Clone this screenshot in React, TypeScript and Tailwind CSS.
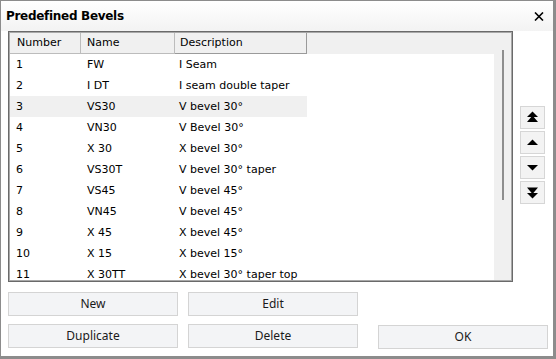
const rows = [
  ["1", "FW", "I Seam"],
  ["2", "I DT", "I seam double taper"],
  ["3", "VS30", "V bevel 30°"],
  ["4", "VN30", "V Bevel 30°"],
  ["5", "X 30", "X bevel 30°"],
  ["6", "VS30T", "V bevel 30° taper"],
  ["7", "VS45", "V bevel 45°"],
  ["8", "VN45", "V bevel 45°"],
  ["9", "X 45", "X bevel 45°"],
  ["10", "X 15", "X bevel 15°"],
  ["11", "X 30TT", "X bevel 30° taper top"],
];

const Btn = ({ label }: { label: string }) => (
  <button className="h-[24px] w-[170px] border border-[#d4d4d4] bg-[#f3f4f6] text-[12px] text-[#1a1a1a] font-['Noto_Sans',sans-serif]">
    {label}
  </button>
);

const ArrowBtn = ({ kind }: { kind: "top" | "up" | "down" | "bottom" }) => (
  <button className="flex h-[23px] w-[25px] items-center justify-center border border-[#d6d6d6] bg-[#f3f3f3]">
    <svg width="13" height="13" viewBox="0 0 13 13" fill="black">
      {kind === "top" && (
        <>
          <polygon points="6.5,0.5 12,6 1,6" />
          <polygon points="6.5,4.5 12,11 1,11" />
        </>
      )}
      {kind === "up" && <polygon points="6.5,3.5 12,9 1,9" />}
      {kind === "down" && <polygon points="1,4 12,4 6.5,9.5" />}
      {kind === "bottom" && (
        <>
          <polygon points="1,1.5 12,1.5 6.5,8" />
          <polygon points="1,7 12,7 6.5,12.5" />
        </>
      )}
    </svg>
  </button>
);

export default function App() {
  return (
    <div className="h-[359px] w-[556px] overflow-hidden bg-[#8c8c8c] pb-[3px] pl-px pr-[3px] pt-px font-['DejaVu_Sans',sans-serif]">
      <div className="flex h-full w-full flex-col bg-white">
        <div className="flex h-[30px] items-center justify-between bg-gradient-to-b from-white to-[#f3f3f3] pl-[5px] pr-[9px]">
          <span className="text-[12px] font-bold tracking-[-0.3px] text-black">Predefined Bevels</span>
          <svg width="10" height="9" viewBox="0 0 10 9" className="mt-px">
            <path d="M1 0.5 L9 8.5 M9 0.5 L1 8.5" stroke="black" strokeWidth="1.6" />
          </svg>
        </div>

        <div className="flex pl-[7px]">
          <div className="h-[251px] w-[505px] border border-[#6a6a6a] p-px shadow-[inset_0_0_0_1px_#a8a8a8]">
            <div className="flex h-full">
              <div className="flex-1 overflow-hidden">
                <div className="flex h-[21px] bg-[#f0f0f0] text-[11px] leading-[20px] text-black">
                  <div className="w-[71px] border-b border-r border-[#bcbcbc] pl-[7px]">Number</div>
                  <div className="w-[94px] border-b border-r border-[#bcbcbc] pl-[6px]">Name</div>
                  <div className="w-[132px] border-b border-r border-[#9a9a9a] pl-[5px]">Description</div>
                </div>
                {rows.map((r, i) => (
                  <div
                    key={r[0]}
                    className={`flex h-[21px] w-[297px] text-[11px] leading-[21px] text-black ${i === 2 ? "bg-[#f0f0f0]" : ""}`}
                  >
                    <div className="w-[71px] pl-[6px]">{r[0]}</div>
                    <div className="w-[94px] pl-[6px]">{r[1]}</div>
                    <div className="w-[132px] whitespace-nowrap pl-[4px]">{r[2]}</div>
                  </div>
                ))}
              </div>
              <div className="flex w-[17px] justify-center bg-[#f0f0f0] pt-[17px]">
                <div className="h-[150px] w-[2px] bg-[#8e8e8e]" />
              </div>
            </div>
          </div>
          <div className="ml-[7px] mt-[75px] flex flex-col gap-[2px]">
            <ArrowBtn kind="top" />
            <ArrowBtn kind="up" />
            <ArrowBtn kind="down" />
            <ArrowBtn kind="bottom" />
          </div>
        </div>

        <div className="mt-[10px] flex flex-col gap-[8px] pl-[7px]">
          <div className="flex gap-[10px]">
            <Btn label="New" />
            <Btn label="Edit" />
          </div>
          <div className="flex gap-[10px]">
            <Btn label="Duplicate" />
            <Btn label="Delete" />
            <div className="ml-[10px]">
              <Btn label="OK" />
            </div>
          </div>
        </div>
      </div>
    </div>
  );
}
